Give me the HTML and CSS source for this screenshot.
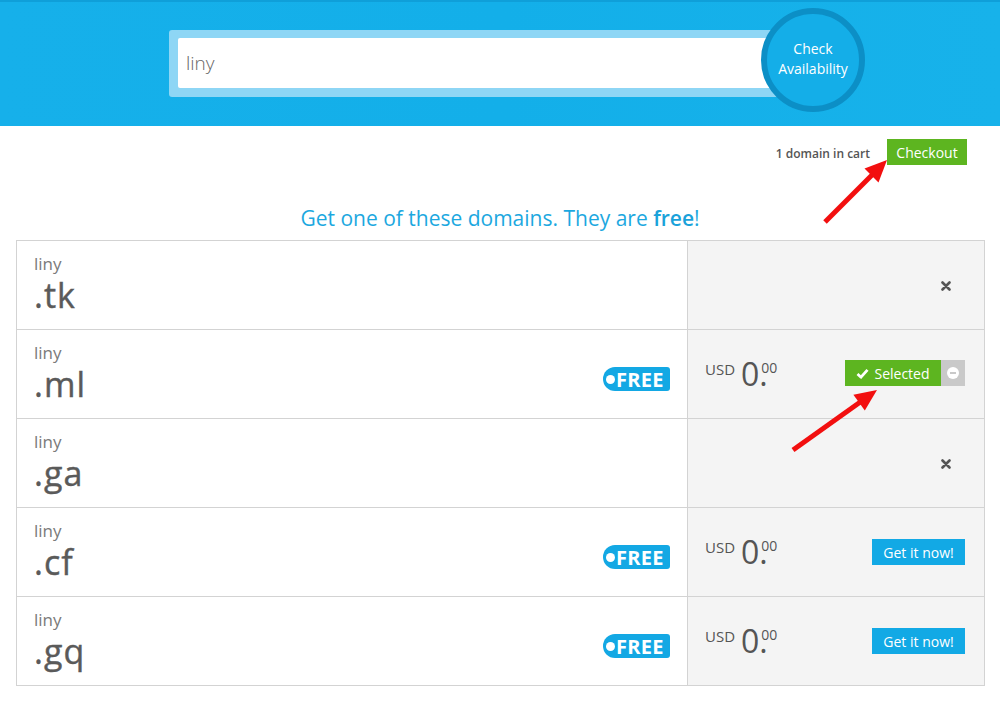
FILE: index.html
```html
<!DOCTYPE html>
<html lang="en">
<head>
<meta charset="utf-8">
<title>Domain search</title>
<link rel="stylesheet" href="styles.css">
</head>
<body>
<header class="hero">
  <div class="search-box">
    <div class="search-input">liny</div>
  </div>
  <div class="check-btn">Check<br>Availability</div>
</header>

<div class="cart-bar">
  <span class="cart-count">1 domain in cart</span>
  <span class="btn btn-green checkout">Checkout</span>
</div>

<h2 class="offer">Get one of these domains. They are <b>free</b>!</h2>

<div class="domains">
  <div class="row">
    <div class="cell-name"><div class="name"><div class="sld">liny</div><div class="tld">.tk</div></div></div>
    <div class="cell-action"><span class="spacer"></span><svg class="x-icon" width="10" height="10" viewBox="0 0 10 10"><path d="M1.5 1.5L8.5 8.5M8.5 1.5L1.5 8.5" stroke="#555" stroke-width="2.6" stroke-linecap="round"/></svg></div>
  </div>
  <div class="row">
    <div class="cell-name"><div class="name"><div class="sld">liny</div><div class="tld">.ml</div></div><span class="free"><i class="dot"></i>FREE</span></div>
    <div class="cell-action">
      <div class="price"><span class="cur">USD</span><span class="int">0</span><span class="dec"><span class="cents">00</span><span class="pt">.</span></span></div>
      <div class="selected"><span class="sel-main"><svg width="13" height="11" viewBox="0 0 13 11"><path d="M1.5 6L5 9.2L11.5 1.8" fill="none" stroke="#fff" stroke-width="2.8" stroke-linejoin="round"/></svg>Selected</span><span class="sel-remove"><i class="minus"></i></span></div>
    </div>
  </div>
  <div class="row">
    <div class="cell-name"><div class="name"><div class="sld">liny</div><div class="tld">.ga</div></div></div>
    <div class="cell-action"><span class="spacer"></span><svg class="x-icon" width="10" height="10" viewBox="0 0 10 10"><path d="M1.5 1.5L8.5 8.5M8.5 1.5L1.5 8.5" stroke="#555" stroke-width="2.6" stroke-linecap="round"/></svg></div>
  </div>
  <div class="row">
    <div class="cell-name"><div class="name"><div class="sld">liny</div><div class="tld">.cf</div></div><span class="free"><i class="dot"></i>FREE</span></div>
    <div class="cell-action">
      <div class="price"><span class="cur">USD</span><span class="int">0</span><span class="dec"><span class="cents">00</span><span class="pt">.</span></span></div>
      <span class="btn btn-blue">Get it now!</span>
    </div>
  </div>
  <div class="row">
    <div class="cell-name"><div class="name"><div class="sld">liny</div><div class="tld">.gq</div></div><span class="free"><i class="dot"></i>FREE</span></div>
    <div class="cell-action">
      <div class="price"><span class="cur">USD</span><span class="int">0</span><span class="dec"><span class="cents">00</span><span class="pt">.</span></span></div>
      <span class="btn btn-blue">Get it now!</span>
    </div>
  </div>
</div>

<svg class="arrows" width="1000" height="702" viewBox="0 0 1000 702">
  <line x1="825" y1="222" x2="873" y2="174" stroke="#f20f0f" stroke-width="5"/>
  <polygon points="887,160 878.5,182.5 864.5,168.5" fill="#f20f0f"/>
  <line x1="793" y1="450" x2="861" y2="401.5" stroke="#f20f0f" stroke-width="5"/>
  <polygon points="877,390 864.8,410.6 853.4,394.8" fill="#f20f0f"/>
</svg>
</body>
</html>
```

FILE: styles.css
```css
* { box-sizing: border-box; }
html, body { margin: 0; padding: 0; }
body {
  font-family: "Open Sans", "Noto Sans", "Liberation Sans", sans-serif;
  background: #fff;
  color: #555;
  position: relative;
  width: 1000px;
  height: 702px;
  overflow: hidden;
}

.hero {
  height: 126px;
  background: linear-gradient(90deg, #16b0ea 0%, #13afe9 50%, #17b2ea 100%);
  border-top: 2px solid #0f9fd9;
  display: flex;
  align-items: flex-start;
  padding-left: 169px;
}
.search-box {
  margin-top: 28px;
  width: 610px;
  height: 67px;
  background: #8ed6f5;
  border-radius: 3px;
  padding: 8px 0 9px 9px;
}
.search-input {
  height: 50px;
  background: #fff;
  border-radius: 2px;
  padding-left: 8px;
  font-size: 19px;
  font-weight: 300;
  color: #666;
  line-height: 50px;
}
.check-btn {
  margin-top: 6px;
  margin-left: -18px;
  width: 104px;
  height: 104px;
  border-radius: 50%;
  border: 6px solid #0c8fc6;
  background: #14aee8;
  color: #fff;
  font-size: 14px;
  line-height: 20px;
  display: flex;
  align-items: center;
  justify-content: center;
  text-align: center;
  padding-bottom: 2px;
}

.cart-bar {
  display: flex;
  justify-content: flex-end;
  align-items: center;
  margin-top: 13px;
  padding-right: 33px;
  height: 26px;
}
.cart-count {
  font-size: 12px;
  font-weight: 600;
  color: #555;
  margin-right: 17px;
  padding-top: 3px;
}
.btn {
  display: inline-flex;
  align-items: center;
  justify-content: center;
  color: #fff;
  font-size: 14px;
  height: 26px;
}
.btn-green { background: #5db520; }
.checkout { width: 80px; }
.btn-blue { background: #12a9e5; width: 93px; }

.offer {
  margin: 39px 0 8px;
  text-align: center;
  font-size: 21px;
  font-weight: 400;
  line-height: 28px;
  color: #1ca8df;
}
.offer b { font-weight: 600; color: #1aa2da; }

.domains {
  margin: 0 15px 0 16px;
  border: 1px solid #d3d3d3;
  border-bottom: 0;
}
.row {
  display: grid;
  grid-template-columns: 671px 1fr;
  height: 89px;
  border-bottom: 1px solid #d3d3d3;
}
.cell-name {
  display: flex;
  align-items: center;
  justify-content: space-between;
  padding: 0 17px 0 17px;
  border-right: 1px solid #d3d3d3;
}
.name { align-self: flex-start; padding-top: 13px; }
.sld {
  font-size: 17px;
  line-height: 20px;
  font-weight: 400;
  color: #7a7a7a;
}
.tld {
  margin-top: 4px;
  font-size: 34px;
  line-height: 34px;
  font-weight: 400;
  letter-spacing: 1px;
  color: #5a5a5a;
  -webkit-text-stroke: 0.4px #5a5a5a;
}

.free {
  margin-top: 10px;
  display: inline-flex;
  align-items: center;
  height: 24px;
  width: 67px;
  padding-left: 3px;
  background: #13a8e4;
  border-radius: 12px 3px 3px 12px;
  color: #fff;
  font-weight: 700;
  font-size: 20px;
  letter-spacing: 0.3px;
}
.dot {
  display: inline-block;
  width: 9px;
  height: 9px;
  border-radius: 50%;
  background: #fff;
  margin-right: 1px;
}

.cell-action {
  background: #f4f4f4;
  display: flex;
  align-items: center;
  justify-content: space-between;
  padding: 0 19px 0 17px;
}
.x-icon { margin-right: 14px; margin-top: 2px; }

.price {
  display: flex;
  align-items: flex-start;
  color: #555;
  height: 31px;
  margin-top: -2px;
}
.cur {
  font-size: 15px;
  line-height: 16px;
  margin-top: 3px;
  margin-right: 6px;
}
.int {
  font-size: 32px;
  line-height: 31px;
}
.dec {
  display: flex;
  flex-direction: column;
  align-items: flex-start;
}
.cents {
  font-size: 14px;
  line-height: 10px;
  margin-top: 5px;
  margin-left: 2px;
}
.pt {
  font-size: 32px;
  line-height: 0;
  height: 0;
  margin-top: 1px;
}

.selected { display: flex; height: 26px; margin-top: -2px; }
.sel-main {
  background: #5db520;
  color: #fff;
  font-size: 14px;
  width: 96px;
  display: flex;
  align-items: center;
  justify-content: center;
  gap: 5px;
}
.sel-remove {
  width: 24px;
  background: #c9c9c9;
  display: flex;
  align-items: center;
  justify-content: center;
}
.minus {
  width: 12px;
  height: 12px;
  border-radius: 50%;
  background: #fff;
  display: flex;
  align-items: center;
  justify-content: center;
}
.minus::after {
  content: "";
  width: 6px;
  height: 2px;
  background: #c9c9c9;
}

.arrows {
  position: absolute;
  left: 0;
  top: 0;
  pointer-events: none;
}
```
